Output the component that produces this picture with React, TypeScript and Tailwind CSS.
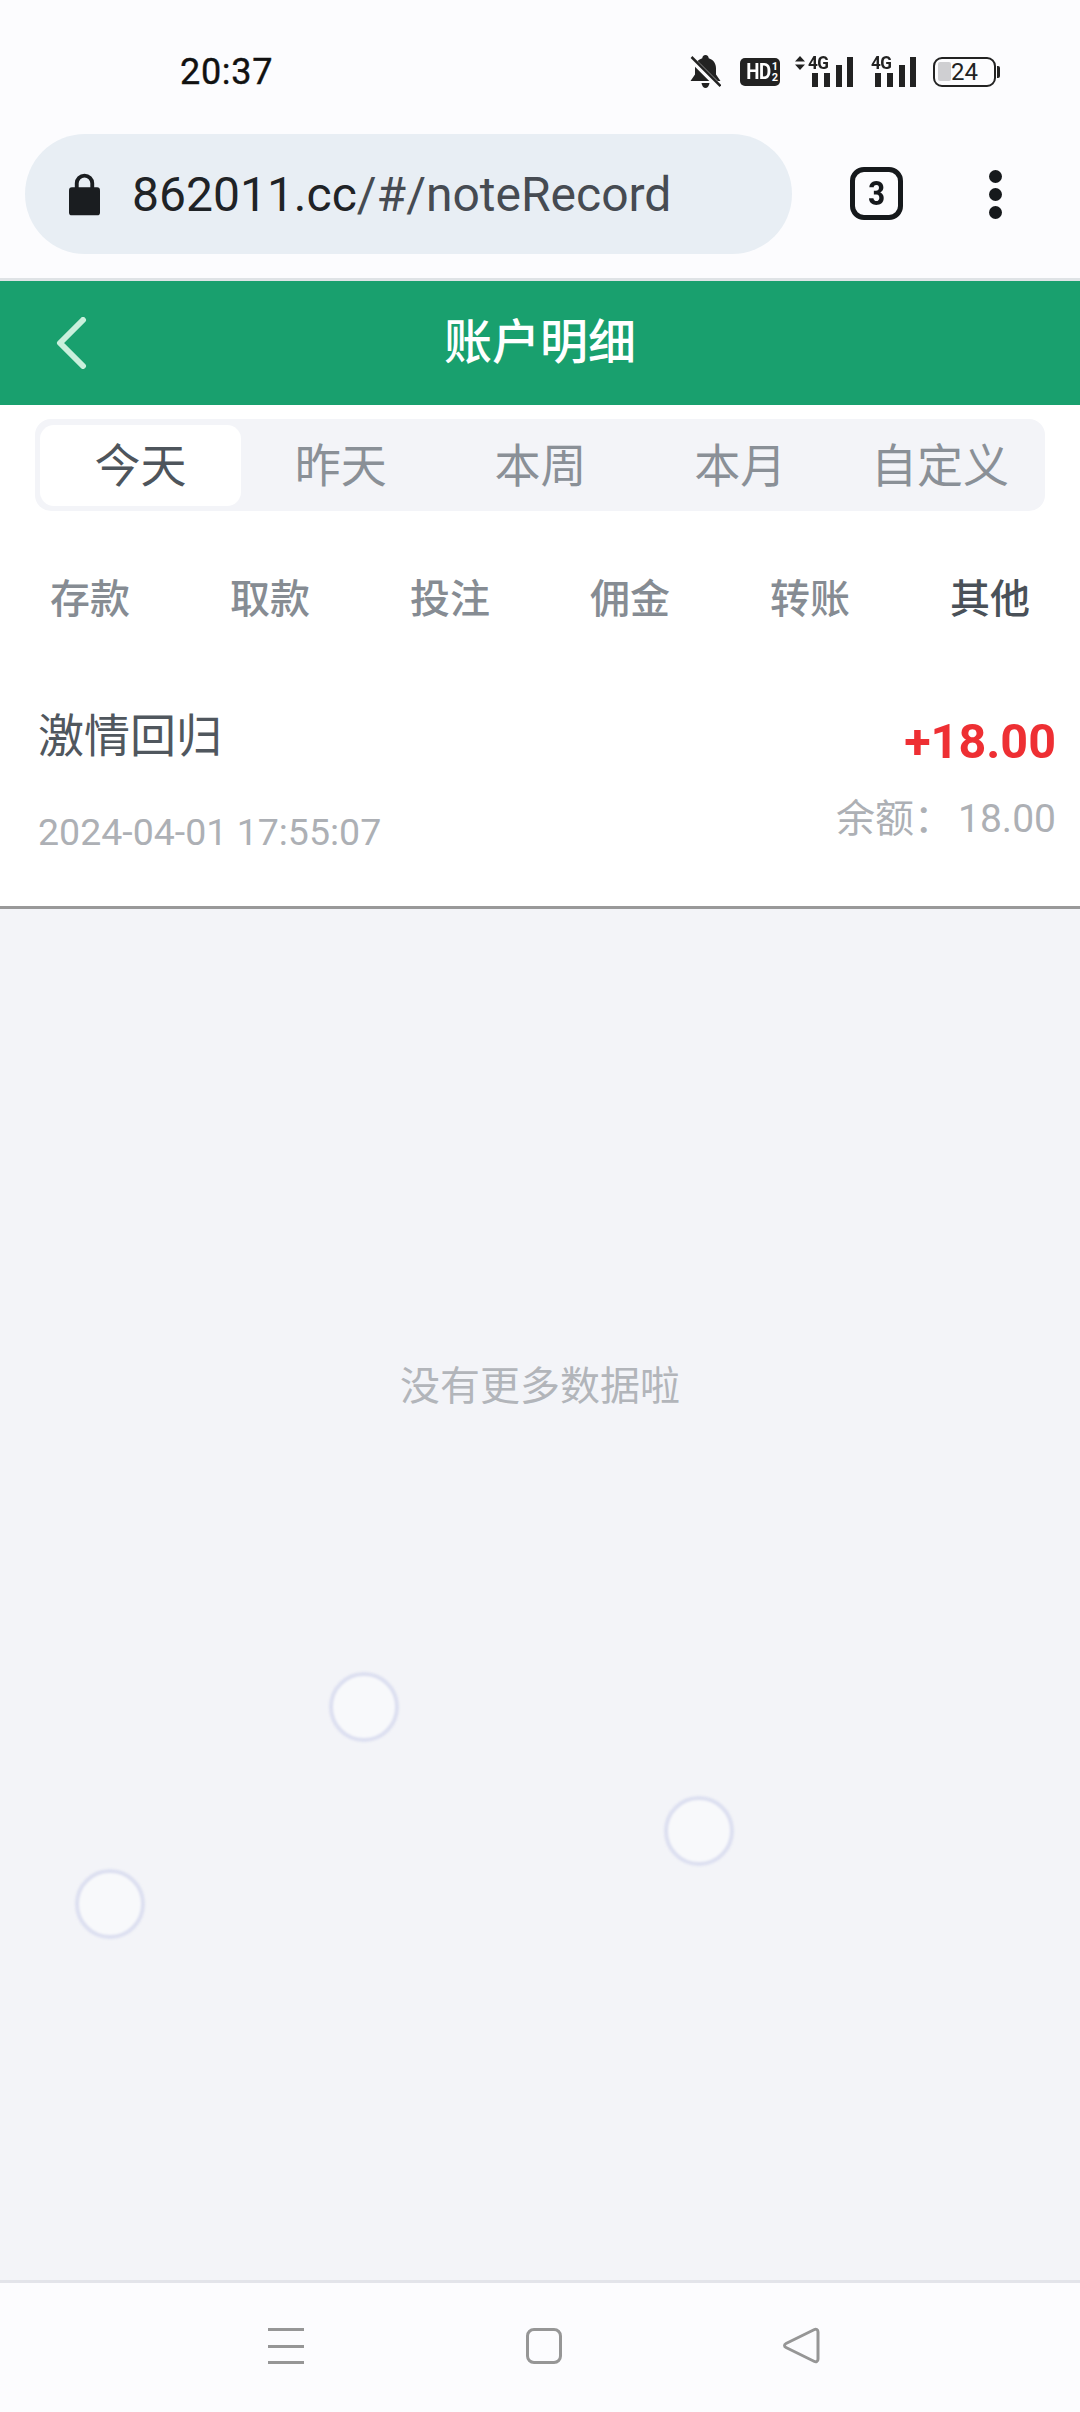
const tabs = ['今天', '昨天', '本周', '本月', '自定义'];
const categories = ['存款', '取款', '投注', '佣金', '转账', '其他'];

function Signal({ arrows }: { arrows?: boolean }) {
  return (
    <div className="relative h-[30px] w-[46px]">
      {arrows ? (
        <svg className="absolute left-[-13px] top-[-1px] h-[14px] w-[10px]" viewBox="0 0 10 14">
          <path d="M5 0 10 5.500H0zM0 8.500h10L5 14z" fill="#222" />
        </svg>
      ) : null}
      <span className="absolute left-0 top-[-4px] origin-left scale-x-[0.95] text-[18px] leading-[20px] font-bold tracking-[-0.5px] text-[#222]">4G</span>
      <svg className="absolute left-0 top-0 h-[30px] w-[46px]" viewBox="0 0 46 30">
        <rect x="4" y="16" width="6" height="14" fill="#222" />
        <rect x="16" y="16" width="6" height="14" fill="#222" />
        <rect x="28" y="8" width="6" height="22" fill="#222" />
        <rect x="39" y="0" width="6" height="30" fill="#222" />
      </svg>
    </div>
  );
}

function StatusBar() {
  return (
    <div className="flex h-[120px] items-center bg-[#fcfcfe] pt-[24px] pl-[180px] pr-[80px] font-['Roboto',sans-serif] text-[#111]">
      <span className="text-[36px] leading-[42px] font-normal tracking-[0.7px] [-webkit-text-stroke:0.4px_#111]">20:37</span>
      <div className="ml-auto flex items-center">
        <svg className="h-[34px] w-[31px]" viewBox="0 0 31 34">
          <path d="M15.500 0c2 0 3.200 1.300 3.200 3.200 4.800 1.400 7.300 5.300 7.300 10v6.300l4.500 6.500H.500L5 19.500v-6.300c0-4.700 2.500-8.600 7.300-10C12.300 1.300 13.500 0 15.500 0z" fill="#222" />
          <path d="M11.500 28h8c-.4 3-2.200 5-4 5s-3.600-2-4-5z" fill="#222" />
          <path d="M1.500 4l28 28" stroke="#fcfcfe" strokeWidth="6" />
          <path d="M1.500 2l29 29" stroke="#222" strokeWidth="2.500" />
        </svg>
        <div className="ml-[19px] flex h-[28px] w-[40px] items-center justify-center rounded-[5px] bg-[#222] text-white">
          <span className="origin-right scale-x-[0.85] text-[22px] leading-none font-bold tracking-[-0.5px]">HD</span>
          <span className="ml-[1px] flex flex-col text-[11px] leading-[11px] font-bold">
            <span>1</span>
            <span>2</span>
          </span>
        </div>
        <div className="ml-[28px]">
          <Signal arrows />
        </div>
        <div className="ml-[17px]">
          <Signal />
        </div>
        <div className="ml-[16px] flex items-center">
          <div className="relative flex h-[30px] w-[63px] items-center justify-center overflow-hidden rounded-[9px] border-[2.500px] border-[#222]">
            <div className="absolute left-[3px] top-[3px] h-[19px] w-[13px] rounded-[2px] bg-[#cfcfd2]" />
            <span className="relative text-[24px] leading-none text-[#222]">24</span>
          </div>
          <div className="ml-[1px] h-[12px] w-[3px] rounded-r-[2px] bg-[#222]" />
        </div>
      </div>
    </div>
  );
}

function BrowserBar() {
  return (
    <div className="flex h-[161px] items-start border-b-[3px] border-[#dfe3e6] bg-[#fcfcfe] pt-[14px] pl-[25px] font-['Roboto',sans-serif]">
      <div className="flex h-[120px] w-[767px] items-center rounded-[60px] bg-[#e8eef4] pl-[44px]">
        <svg className="h-[43px] w-[31px]" viewBox="0 0 32 43">
          <path d="M8 17v-7a8 8 0 0 1 16 0v7" fill="none" stroke="#1a1d20" strokeWidth="4" />
          <rect x="0" y="14" width="32" height="29" rx="3" fill="#1a1d20" />
        </svg>
        <span className="ml-[32px] mt-[2px] text-[48px] leading-[56px] text-[#1f2326]">
          862011.cc<span className="text-[#464b52]">/#/noteRecord</span>
        </span>
      </div>
      <div className="ml-[58px] mt-[33px] flex h-[53px] w-[53px] items-center justify-center rounded-[14px] border-[5px] border-[#16191c] text-[33px] leading-none font-extrabold text-[#16191c]">
        <span className="scale-x-[0.88]">3</span>
      </div>
      <div className="ml-[86px] mt-[36px] flex flex-col gap-[5px]">
        <span className="h-[13px] w-[13px] rounded-full bg-[#16191c]" />
        <span className="h-[13px] w-[13px] rounded-full bg-[#16191c]" />
        <span className="h-[13px] w-[13px] rounded-full bg-[#16191c]" />
      </div>
    </div>
  );
}

function Header() {
  return (
    <div className="relative flex h-[124px] items-center justify-center bg-[#19a06e]">
      <svg className="absolute left-[54px] top-[36px] h-[52px] w-[34px]" viewBox="0 0 34 52">
        <path d="M29 3 6 26l23 23" fill="none" stroke="#c9f0dd" strokeWidth="6" strokeLinecap="round" strokeLinejoin="round" />
      </svg>
      <span className="text-[48px] leading-[56px] font-medium text-white">账户明细</span>
    </div>
  );
}

function Tabs() {
  return (
    <div className="bg-white pt-[14px] pl-[35px] pr-[35px]">
      <div className="flex h-[92px] items-center rounded-[16px] bg-[#f3f4f8] px-[5px]">
        {tabs.map((tab, index) => (
          <div
            key={tab}
            className={
              index === 0
                ? 'flex h-[81px] w-[201px] items-center justify-center rounded-[14px] bg-white pt-[2px] text-[46px] text-[#4e555c]'
                : 'flex h-[81px] w-[200px] items-center justify-center pt-[2px] text-[46px] text-[#8a9097]'
            }
          >
            {tab}
          </div>
        ))}
      </div>
    </div>
  );
}

function Categories() {
  return (
    <div className="grid h-[178px] grid-cols-6 bg-white">
      {categories.map((item, index) => (
        <div
          key={item}
          className={
            index === 5
              ? 'flex items-center justify-center text-[40px] font-medium text-[#4a5158]'
              : 'flex items-center justify-center text-[40px] font-medium text-[#868c93]'
          }
        >
          {item}
        </div>
      ))}
    </div>
  );
}

function RecordRow() {
  return (
    <div className="flex h-[220px] justify-between border-b-[3px] border-[#999] bg-white pl-[38px] pr-[24px]">
      <div>
        <div className="mt-[17px] text-[46px] leading-[60px] text-[#50575e]">激情回归</div>
        <div className="mt-[44px] font-['Roboto',sans-serif] text-[37.500px] leading-[44px] text-[#adb0b5]">2024-04-01 17:55:07</div>
      </div>
      <div className="flex flex-col items-end">
        <div className="mt-[25px] font-['Roboto',sans-serif] text-[48.500px] leading-[56px] font-bold text-[#ee2f33]">+18.00</div>
        <div className="mt-[26px] text-[39px] leading-[46px] text-[#adb0b5]">
          余额：<span className="ml-[5px] font-['Roboto',sans-serif]">18.00</span>
        </div>
      </div>
    </div>
  );
}

function Bubble({ className }: { className: string }) {
  return (
    <div className={`absolute h-[70px] w-[70px] rounded-full border-[4px] border-[#dcdff0] bg-[#f8f9fb] blur-[0.8px] ${className}`} />
  );
}

function NavBar() {
  return (
    <div className="relative h-[132px] border-t-[3px] border-[#e3e4ea] bg-[#fcfcfe]">
      <div className="absolute left-[268px] top-[45px] flex h-[36px] w-[36px] flex-col justify-between">
        <span className="h-[3px] bg-[#969696]" />
        <span className="h-[3px] bg-[#969696]" />
        <span className="h-[3px] bg-[#969696]" />
      </div>
      <div className="absolute left-[526px] top-[45px] h-[36px] w-[36px] rounded-[8px] border-[3px] border-[#969696]" />
      <svg className="absolute left-[783px] top-[44px] h-[37px] w-[37px]" viewBox="0 0 37 37">
        <path d="M3 16.500 31.500 2.500c1.500-.7 3.500 0 3.500 2.500v27c0 2.500-2 3.200-3.500 2.500L3 20.500c-2-1-2-3 0-4z" fill="none" stroke="#969696" strokeWidth="3" strokeLinejoin="round" />
      </svg>
    </div>
  );
}

export default function App() {
  return (
    <div className="flex h-[2412px] w-[1080px] flex-col overflow-hidden bg-[#f3f4f8] font-['Roboto','Noto_Sans_CJK_SC',sans-serif]">
      <StatusBar />
      <BrowserBar />
      <Header />
      <Tabs />
      <Categories />
      <RecordRow />
      <div className="relative flex-1">
        <div className="pt-[453px] text-center text-[40px] leading-[50px] text-[#b2b5ba]">没有更多数据啦</div>
        <Bubble className="left-[329px] top-[763px]" />
        <Bubble className="left-[664px] top-[887px]" />
        <Bubble className="left-[75px] top-[960px]" />
      </div>
      <NavBar />
    </div>
  );
}
